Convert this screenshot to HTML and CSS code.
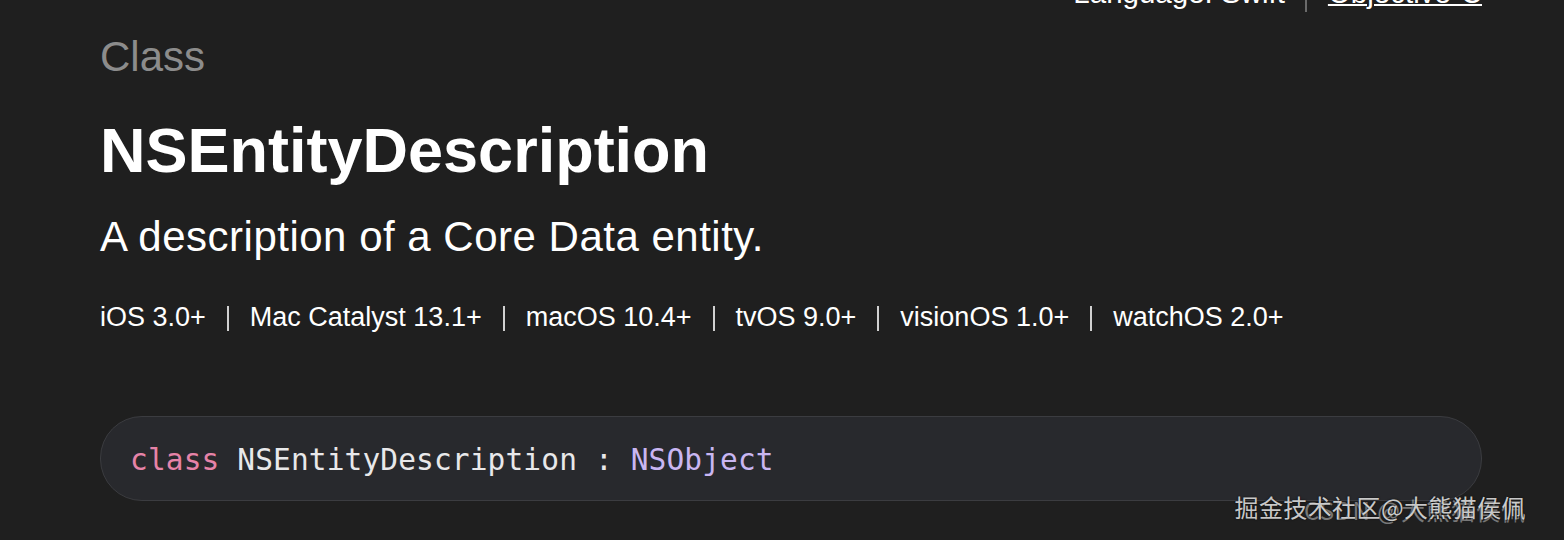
FILE: index.html
```html
<!DOCTYPE html>
<html lang="en">
<head>
<meta charset="utf-8">
<title>NSEntityDescription</title>
<link rel="stylesheet" href="styles.css">
</head>
<body>
<div class="page">
  <nav class="lang-bar">
    <span class="lang-label">Language: Swift</span>
    <span class="lang-sep"></span>
    <a class="lang-link" href="#">Objective-C</a>
  </nav>
  <main class="topic">
    <div class="eyebrow">Class</div>
    <h1 class="title">NSEntityDescription</h1>
    <p class="abstract">A description of a Core Data entity.</p>
    <ul class="platforms">
      <li class="platform">iOS 3.0+</li>
      <li class="platform">Mac Catalyst 13.1+</li>
      <li class="platform">macOS 10.4+</li>
      <li class="platform">tvOS 9.0+</li>
      <li class="platform">visionOS 1.0+</li>
      <li class="platform">watchOS 2.0+</li>
    </ul>
    <pre class="declaration"><span class="kw">class</span> NSEntityDescription : <span class="type">NSObject</span></pre>
  </main>
  <div class="watermark">
    <span class="wm wm-back">CSDN @大熊猫侯佩</span>
    <span class="wm wm-front">掘金技术社区@大熊猫侯佩</span>
  </div>
</div>
</body>
</html>
```
FILE: styles.css
```css
* { box-sizing: border-box; }
html, body {
  margin: 0;
  padding: 0;
  background: #1f1f1f;
  height: 540px;
  overflow: hidden;
}
body {
  font-family: "Liberation Sans", Arial, sans-serif;
  color: #ffffff;
}
.page {
  position: relative;
  display: flow-root;
  width: 1564px;
  height: 540px;
  padding: 0 82px 0 100px;
}
.lang-bar {
  display: flex;
  justify-content: flex-end;
  align-items: center;
  height: 34px;
  margin-top: -24px;
  font-size: 29.5px;
  line-height: 34px;
}
.lang-label { color: #ffffff; }
.lang-sep {
  width: 2px;
  height: 24px;
  background: #6a6a6a;
  margin: 0 21px 0 20px;
  position: relative;
  top: 7px;
}
.lang-link {
  color: #ffffff;
  text-decoration: underline;
  text-decoration-thickness: 2px;
  text-underline-offset: 1px;
}
.topic {
  padding-top: 22px;
}
.eyebrow {
  font-size: 42px;
  line-height: 50px;
  color: #8c8c8c;
}
.title {
  margin: 33px 0 0 0;
  font-size: 63px;
  line-height: 70px;
  font-weight: 700;
  color: #ffffff;
}
.abstract {
  margin: 27px 0 0 0;
  font-size: 42px;
  line-height: 50px;
  color: #ffffff;
  letter-spacing: 0.5px;
}
.platforms {
  list-style: none;
  margin: 38px 0 0 0;
  padding: 0;
  display: flex;
  align-items: center;
  font-size: 27px;
  line-height: 34px;
  color: #ffffff;
}
.platform {
  display: flex;
  align-items: center;
}
.platform + .platform::before {
  content: "";
  display: block;
  width: 2px;
  height: 25px;
  background: #d0d0d0;
  margin: 0 21px;
  position: relative;
  top: 1px;
}
.declaration {
  margin: 82px 0 0 0;
  height: 85px;
  padding: 25px 29px 22px 29px;
  border: 1.5px solid #3b3c40;
  border-radius: 42px;
  background: #28292d;
  font-family: "DejaVu Sans Mono", "Liberation Mono", monospace;
  font-size: 29.5px;
  line-height: 36px;
  color: #e8e8ea;
  letter-spacing: 0.12px;
}
.kw { color: #e683a8; }
.type { color: #c9b6f2; }
.watermark {
  position: absolute;
  right: 38px;
  bottom: 18px;
  width: 292px;
  height: 30px;
  font-family: "Noto Sans CJK SC", sans-serif;
  font-size: 24px;
  line-height: 30px;
}
.wm {
  position: absolute;
  white-space: nowrap;
  right: 0;
}
.wm-back {
  top: 3px;
  color: rgba(210, 210, 210, 0.5);
  letter-spacing: 1px;
}
.wm-front {
  top: 0;
  color: rgba(235, 235, 235, 0.85);
  letter-spacing: 0.4px;
  text-shadow: 0 0 2px rgba(0, 0, 0, 0.8);
}
```
